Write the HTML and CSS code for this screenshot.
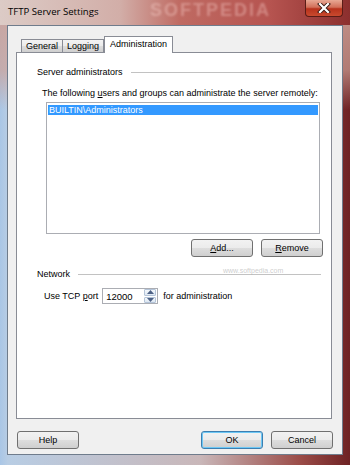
FILE: index.html
```html
<!DOCTYPE html>
<html>
<head>
<meta charset="utf-8">
<link rel="stylesheet" href="styles.css">
</head>
<body>
<div class="window">
  <div class="titlebar">
    <span class="title">TFTP Server Settings</span>
    <span class="wm-title">SOFTPEDIA</span>
    <div class="close">
      <svg width="14" height="10" viewBox="0 0 14 10">
        <path d="M3 1 L11 9 M11 1 L3 9" stroke="#3a1a14" stroke-width="4" stroke-linecap="square"/>
        <path d="M3 1 L11 9 M11 1 L3 9" stroke="#ffffff" stroke-width="2.2" stroke-linecap="square"/>
      </svg>
    </div>
  </div>
  <div class="client">
    <div class="tabs">
      <div class="tab">General</div>
      <div class="tab">Logging</div>
      <div class="tab active">Administration</div>
    </div>
    <div class="panel">
      <div class="group-head"><span>Server administrators</span><i class="rule"></i></div>
      <div class="group-body">
        <div class="desc">The following <u>u</u>sers and groups can administrate the server remotely:</div>
        <div class="listbox">
          <div class="item selected">BUILTIN\Administrators</div>
        </div>
        <div class="list-buttons">
          <div class="btn"><u>A</u>dd...</div>
          <div class="btn"><u>R</u>emove</div>
        </div>
      </div>
      <div class="group-head net"><span>Network</span><i class="rule"></i></div>
      <div class="port-row">
        <span>Use TCP <u>p</u>ort</span>
        <div class="spin">
          <span class="spin-val">12000</span>
          <div class="spin-btns">
            <div class="arrow up"><svg width="7" height="4" viewBox="0 0 7 4"><path d="M0 4 L3.5 0 L7 4Z" fill="#4d6185"/></svg></div>
            <div class="arrow down"><svg width="7" height="4" viewBox="0 0 7 4"><path d="M0 0 L3.5 4 L7 0Z" fill="#4d6185"/></svg></div>
          </div>
        </div>
        <span>for administration</span>
      </div>
      <span class="wm-url">www.softpedia.com</span>
    </div>
    <div class="dlg-buttons">
      <div class="btn">Help</div>
      <div class="right">
        <div class="btn default">OK</div>
        <div class="btn">Cancel</div>
      </div>
    </div>
  </div>
</div>
</body>
</html>
```
FILE: styles.css
```css
html, body {
  margin: 0;
  padding: 0;
  background: #ffffff;
}
.window {
  position: relative;
  width: 350px;
  height: 465px;
  overflow: hidden;
  box-sizing: border-box;
  background:
    linear-gradient(to bottom, rgba(205,160,150,0.9) 0px, rgba(205,160,150,0.7) 70px, rgba(205,160,150,0) 110px),
    linear-gradient(to right, #a9c6e6 0px, #b8cde4 8px, #c9b7b9 200px, #9b4c48 300px, #6e2224 350px);
  font-family: "Liberation Sans", Arial, sans-serif;
  font-size: 9px;
  color: #000;
  display: flex;
  flex-direction: column;
}
.titlebar {
  position: relative;
  height: 25px;
  flex: none;
  display: flex;
  align-items: center;
  padding-left: 8px;
  background: linear-gradient(to right, #dccbc6 0px, #d2aea8 120px, #bf6a62 180px, #b65450 270px, #8c2f2e 350px);
}
.title {
  font-family: "Open Sans", "Noto Sans", sans-serif;
  font-size: 9.6px;
  color: #000;
  margin-top: -2px;
}
.wm-title {
  position: absolute;
  left: 150px;
  top: 0px;
  font-family: "Liberation Sans", sans-serif;
  font-weight: bold;
  font-size: 18px;
  letter-spacing: 2px;
  color: rgba(255,220,215,0.35);
  filter: blur(1px);
}
.close {
  position: absolute;
  right: 7px;
  top: 0;
  width: 38px;
  height: 17px;
  box-sizing: border-box;
  border: 1px solid #5a1c16;
  border-top: none;
  border-radius: 0 0 4px 4px;
  background: linear-gradient(to bottom, #e8a894 0%, #d2705a 45%, #b8321c 55%, #c84a2e 100%);
  display: flex;
  align-items: center;
  justify-content: center;
}
.client {
  flex: none;
  margin-left: 7px;
  width: 336px;
  height: 430px;
  box-sizing: border-box;
  border: 1px solid #6f7c8c;
  background: #f0f0f0;
  display: flex;
  flex-direction: column;
  position: relative;
}
.tabs {
  display: flex;
  align-items: flex-end;
  margin-top: 9px;
  margin-left: 13px;
  height: 17px;
  position: relative;
  z-index: 2;
}
.tab {
  height: 12px;
  line-height: 12px;
  box-sizing: content-box;
  padding: 0 4px;
  border: 1px solid #898c95;
  border-bottom: none;
  margin-right: -1px;
  background: linear-gradient(to bottom, #f3f3f3 0%, #ebebeb 50%, #dddddd 51%, #cfcfcf 100%);
  font-size: 9px;
  margin-bottom: 0;
}
.tab.active {
  height: 16px;
  line-height: 14px;
  padding: 0 5px;
  margin-left: 1px;
  margin-bottom: -1px;
  background: #ffffff;
}
.panel {
  position: relative;
  margin: 0 10px 0 8px;
  height: 367px;
  box-sizing: border-box;
  border: 1px solid #898c95;
  background: #ffffff;
  padding: 13px 10px 0 20px;
  display: flex;
  flex-direction: column;
}
.group-head {
  display: flex;
  align-items: center;
  height: 12px;
  line-height: 12px;
}
.group-head .rule {
  flex: 1;
  height: 1px;
  background: #c2c2c2;
  margin-left: 8px;
}
.group-head.net {
  margin-top: 11px;
}
.group-body {
  padding-left: 5px;
  display: flex;
  flex-direction: column;
}
.desc {
  margin-top: 9px;
  line-height: 12px;
  height: 12px;
  white-space: nowrap;
}
.listbox {
  margin-top: 3px;
  margin-left: 4px;
  width: 274px;
  height: 132px;
  box-sizing: border-box;
  border: 1px solid #abadb3;
  background: #ffffff;
  padding: 2px 1px;
}
.item {
  height: 10px;
  line-height: 10px;
  padding-left: 1px;
}
.item.selected {
  background: #3399ff;
  color: #ffffff;
}
.list-buttons {
  display: flex;
  justify-content: flex-end;
  gap: 8px;
  margin-top: 5px;
  margin-right: -2px;
}
.btn {
  width: 62px;
  height: 18px;
  box-sizing: border-box;
  border: 1px solid #707070;
  border-radius: 3px;
  background: linear-gradient(to bottom, #f2f2f2 0%, #ebebeb 50%, #dddddd 51%, #cfcfcf 100%);
  display: flex;
  align-items: center;
  justify-content: center;
  font-size: 9px;
}
.btn.default {
  border-color: #3c7fb1;
  box-shadow: inset 0 0 0 1px #6ec8f5;
}
.port-row {
  display: flex;
  align-items: center;
  margin-top: 8px;
  margin-left: 7px;
  height: 16px;
}
.spin {
  margin-left: 4px;
  margin-right: 5px;
  width: 56px;
  height: 16px;
  box-sizing: border-box;
  border: 1px solid #abadb3;
  background: #ffffff;
  display: flex;
  align-items: center;
  justify-content: space-between;
}
.spin-val {
  padding-left: 3px;
  font-size: 9.5px;
}
.spin-btns {
  display: flex;
  flex-direction: column;
  gap: 1px;
  width: 12px;
  height: 14px;
  margin-right: 1px;
}
.arrow {
  flex: 1;
  border: 1px solid #b4c4d8;
  border-radius: 1px;
  background: linear-gradient(to bottom, #f4f8fc, #dde7f2);
  display: flex;
  align-items: center;
  justify-content: center;
}
.dlg-buttons {
  display: flex;
  justify-content: space-between;
  margin: 12px 9px 0 9px;
}
.dlg-buttons .right {
  display: flex;
  gap: 8px;
}
.wm-url {
  position: absolute;
  left: 206px;
  top: 214px;
  font-size: 7px;
  color: rgba(170,170,170,0.6);
}
```
